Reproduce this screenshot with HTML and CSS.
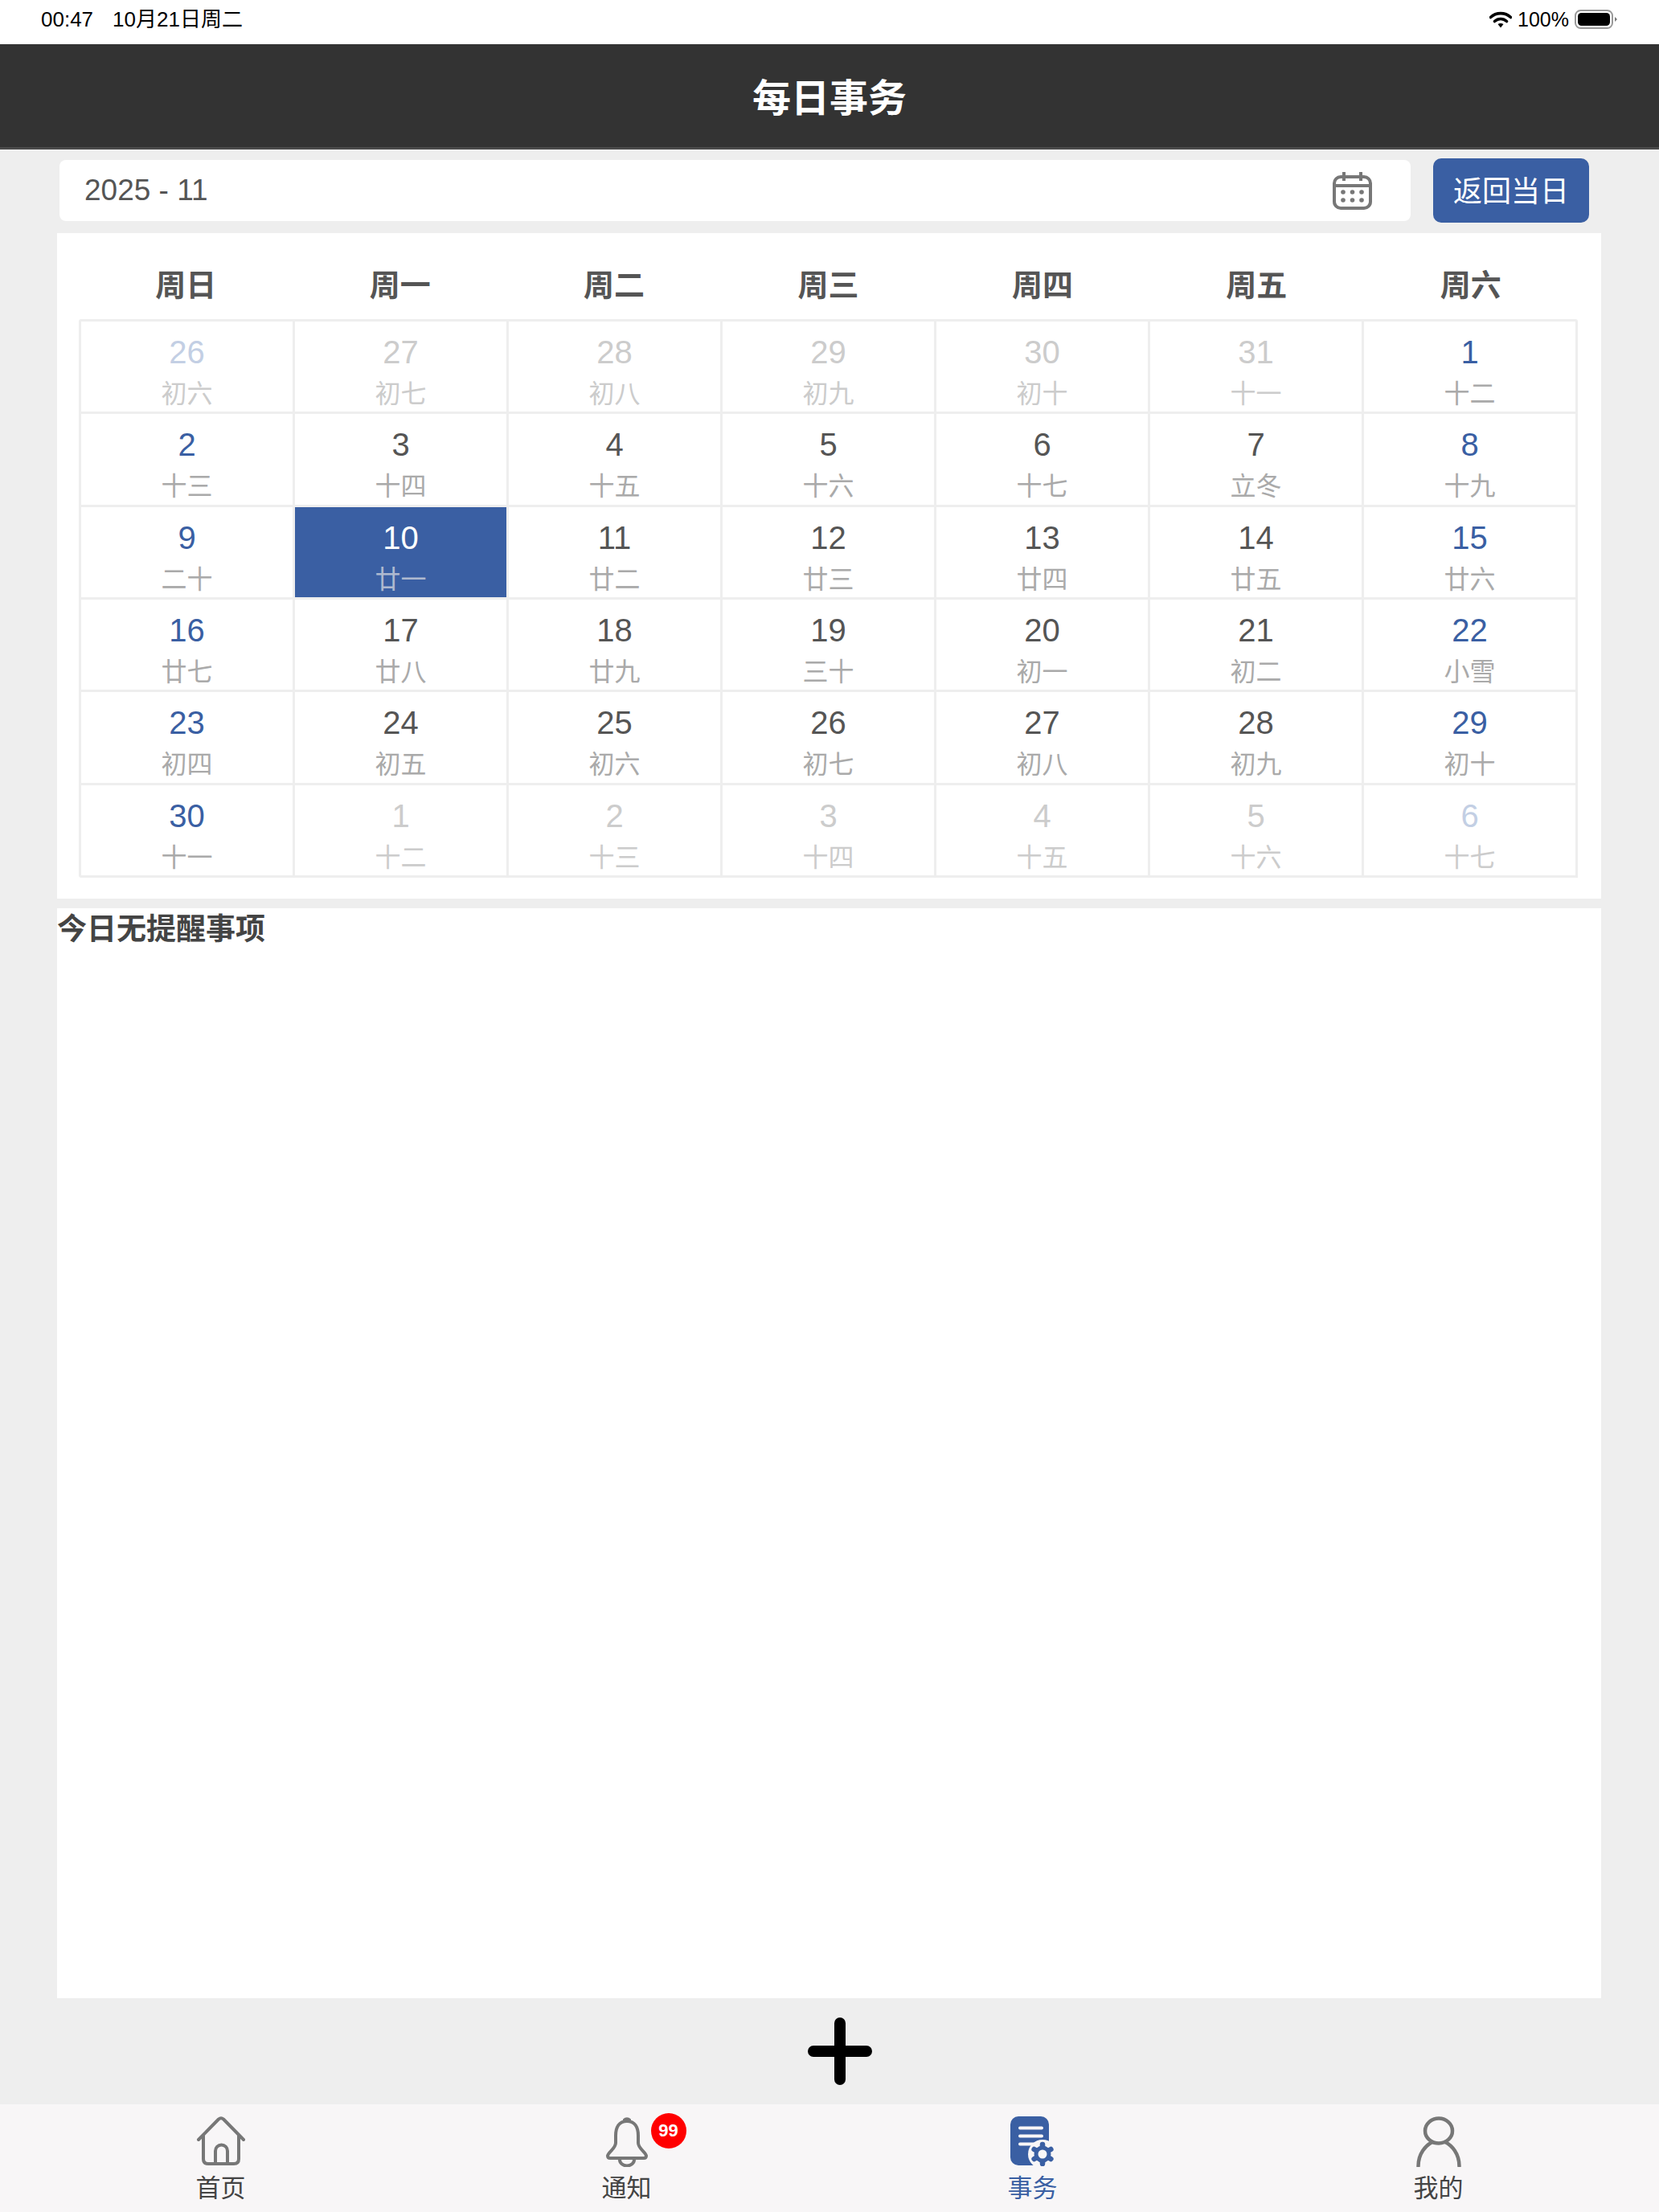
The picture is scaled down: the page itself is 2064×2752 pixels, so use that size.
FILE: index.html
```html
<!DOCTYPE html>
<html lang="zh-CN">
<head>
  <meta charset="UTF-8">
  <title>每日事务</title>
  <link rel="stylesheet" href="styles.css">
</head>
<body>
  <div class="app">

    <!-- status bar -->
    <div class="status-bar">
      <div class="status-left">
        <span>00:47</span>
        <span>10月21日周二</span>
      </div>
      <div class="status-right">
        <svg class="wifi-icon" viewBox="0 0 28 21">
          <path d="M1.5 7.5C8.5 1 19.5 1 26.5 7.5M6.5 12.5C11 8.5 17 8.5 21.5 12.5" fill="none" stroke="#000" stroke-width="3.6" stroke-linecap="round"/>
          <path d="M10.5 16Q14 14 17.5 16L14 20.5Z" fill="#000"/>
        </svg>
        <span>100%</span>
        <svg class="battery-icon" viewBox="0 0 53 24">
          <rect x="1" y="1" width="46" height="22" rx="6.5" fill="none" stroke="#999" stroke-width="2"/>
          <rect x="4" y="4" width="40" height="16" rx="4.5" fill="#000"/>
          <path d="M50 9L53 12L50 15Z" fill="#777"/>
        </svg>
      </div>
    </div>

    <div class="page-header">每日事务</div>

    <div class="main">
      <div class="toolbar">
        <div class="date-input">
          <span>2025 - 11</span>
          <svg class="calendar-icon" viewBox="0 0 49 48">
            <rect x="2" y="7" width="45" height="39" rx="8" fill="none" stroke="#777" stroke-width="4"/>
            <path d="M2 18H47M14 1V12M35 1V12" fill="none" stroke="#777" stroke-width="4"/>
            <g fill="#777">
              <circle cx="13" cy="26" r="2.8"/><circle cx="24.5" cy="26" r="2.8"/><circle cx="36" cy="26" r="2.8"/>
              <circle cx="13" cy="36" r="2.8"/><circle cx="24.5" cy="36" r="2.8"/><circle cx="36" cy="36" r="2.8"/>
            </g>
          </svg>
        </div>
        <div class="today-btn">返回当日</div>
      </div>

      <div class="calendar-card">
        <div class="week-row">
          <div>周日</div><div>周一</div><div>周二</div><div>周三</div><div>周四</div><div>周五</div><div>周六</div>
        </div>
        <div class="day-grid">
          <div class="day other weekend"><b>26</b><i>初六</i></div>
          <div class="day other"><b>27</b><i>初七</i></div>
          <div class="day other"><b>28</b><i>初八</i></div>
          <div class="day other"><b>29</b><i>初九</i></div>
          <div class="day other"><b>30</b><i>初十</i></div>
          <div class="day other"><b>31</b><i>十一</i></div>
          <div class="day weekend"><b>1</b><i>十二</i></div>

          <div class="day weekend"><b>2</b><i>十三</i></div>
          <div class="day"><b>3</b><i>十四</i></div>
          <div class="day"><b>4</b><i>十五</i></div>
          <div class="day"><b>5</b><i>十六</i></div>
          <div class="day"><b>6</b><i>十七</i></div>
          <div class="day"><b>7</b><i>立冬</i></div>
          <div class="day weekend"><b>8</b><i>十九</i></div>

          <div class="day weekend"><b>9</b><i>二十</i></div>
          <div class="day selected"><b>10</b><i>廿一</i></div>
          <div class="day"><b>11</b><i>廿二</i></div>
          <div class="day"><b>12</b><i>廿三</i></div>
          <div class="day"><b>13</b><i>廿四</i></div>
          <div class="day"><b>14</b><i>廿五</i></div>
          <div class="day weekend"><b>15</b><i>廿六</i></div>

          <div class="day weekend"><b>16</b><i>廿七</i></div>
          <div class="day"><b>17</b><i>廿八</i></div>
          <div class="day"><b>18</b><i>廿九</i></div>
          <div class="day"><b>19</b><i>三十</i></div>
          <div class="day"><b>20</b><i>初一</i></div>
          <div class="day"><b>21</b><i>初二</i></div>
          <div class="day weekend"><b>22</b><i>小雪</i></div>

          <div class="day weekend"><b>23</b><i>初四</i></div>
          <div class="day"><b>24</b><i>初五</i></div>
          <div class="day"><b>25</b><i>初六</i></div>
          <div class="day"><b>26</b><i>初七</i></div>
          <div class="day"><b>27</b><i>初八</i></div>
          <div class="day"><b>28</b><i>初九</i></div>
          <div class="day weekend"><b>29</b><i>初十</i></div>

          <div class="day weekend"><b>30</b><i>十一</i></div>
          <div class="day other"><b>1</b><i>十二</i></div>
          <div class="day other"><b>2</b><i>十三</i></div>
          <div class="day other"><b>3</b><i>十四</i></div>
          <div class="day other"><b>4</b><i>十五</i></div>
          <div class="day other"><b>5</b><i>十六</i></div>
          <div class="day other weekend"><b>6</b><i>十七</i></div>
        </div>
      </div>

      <div class="reminder-card">今日无提醒事项</div>

      <div class="add-row">
        <svg class="add-icon" viewBox="0 0 80 84">
          <path d="M40 7V77M7 42H73" fill="none" stroke="#000" stroke-width="14" stroke-linecap="round"/>
        </svg>
      </div>
    </div>

    <!-- bottom tabs -->
    <div class="tab-bar">
      <div class="tab">
        <div class="tab-icon">
          <svg width="62" height="62" viewBox="0 0 62 62">
            <path d="M3 29L28 3.5Q31 1 34 3.5L59 29M9 24V53Q9 59 15 59H47Q53 59 53 53V24" fill="none" stroke="#777" stroke-width="4" stroke-linecap="round" stroke-linejoin="round"/>
            <path d="M24 59V43A7.5 7.500 0 0 1 39 43V59" fill="none" stroke="#777" stroke-width="4"/>
          </svg>
        </div>
        <span>首页</span>
      </div>
      <div class="tab">
        <div class="tab-icon">
          <svg width="54" height="63" viewBox="0 0 54 63">
            <path d="M27 6C17 6 13 14 13 24V33C13 40 4 44 3 49Q3 52 6 52H48Q51 52 51 49C50 44 41 40 41 33V24C41 14 37 6 27 6Z" fill="none" stroke="#777" stroke-width="4" stroke-linejoin="round"/>
            <path d="M22 3.5Q27 -1 32 3.5V7H22Z" fill="#777"/>
            <path d="M18 54A9 7.5 0 0 0 36 54" fill="none" stroke="#777" stroke-width="4"/>
          </svg>
          <span class="badge">99</span>
        </div>
        <span>通知</span>
      </div>
      <div class="tab active">
        <div class="tab-icon">
          <svg width="55" height="62" viewBox="0 0 55 62">
            <rect x="0" y="0" width="48" height="61" rx="10" fill="#3a5fa3"/>
            <path d="M12 14.5H39M12 24.5H39M12 34.5H31" stroke="#f8f6f7" stroke-width="4" stroke-linecap="round"/>
            <circle cx="40" cy="47" r="18" fill="#f8f6f7"/>
            <circle cx="40" cy="47" r="10.500" fill="#3a5fa3"/>
            <path d="M40 35V59M29.600 41L50.400 53M29.600 53L50.400 41" stroke="#3a5fa3" stroke-width="6.500" stroke-linecap="round"/>
            <circle cx="40" cy="47" r="5.500" fill="#f8f6f7"/>
          </svg>
        </div>
        <span>事务</span>
      </div>
      <div class="tab">
        <div class="tab-icon">
          <svg width="56" height="63" viewBox="0 0 56 63">
            <ellipse cx="28" cy="18" rx="17" ry="15.5" fill="none" stroke="#777" stroke-width="4.500"/>
            <path d="M2.500 62C2.500 46 12 36 20 32M53.500 62C53.500 46 44 36 36 32" fill="none" stroke="#777" stroke-width="4.500" stroke-linecap="round"/>
          </svg>
        </div>
        <span>我的</span>
      </div>
    </div>

  </div>
</body>
</html>
```

FILE: styles.css
```css
* {
  box-sizing: border-box;
}

html, body {
  margin: 0;
  padding: 0;
  height: 100%;
  background: #eeeeee;
  font-family: "Liberation Sans", "Noto Sans CJK SC", sans-serif;
  overflow: hidden;
}

.app {
  display: flex;
  flex-direction: column;
  height: 100vh;
}

/* status bar */
.status-bar {
  height: 55px;
  flex-shrink: 0;
  background: #fff;
  color: #000;
  font-size: 25px;
  line-height: 30px;
  display: flex;
  justify-content: space-between;
  align-items: center;
  padding: 0 52px 7px 51px;
}

.status-left {
  display: flex;
  align-items: center;
  gap: 24px;
  font-size: 26px;
}

.status-left span {
  display: block;
  height: 30px;
}

.status-right {
  display: flex;
  align-items: center;
  gap: 7px;
}

.wifi-icon {
  width: 28px;
  height: 21px;
}

.battery-icon {
  width: 53px;
  height: 24px;
}

/* header */
.page-header {
  height: 131px;
  flex-shrink: 0;
  background: #333333;
  border-bottom: 3px solid #4a4a4a;
  color: #fff;
  font-size: 48px;
  font-weight: bold;
  display: flex;
  justify-content: center;
  align-items: center;
  padding-bottom: 3px;
}

.main {
  flex: 1;
  min-height: 0;
  display: flex;
  flex-direction: column;
  padding: 11px 72px 0 71px;
}

/* month picker */
.toolbar {
  display: flex;
  align-items: center;
  gap: 28px;
  height: 80px;
  flex-shrink: 0;
  padding: 0 15px 0 3px;
}

.date-input {
  flex: 1;
  height: 76px;
  background: #fff;
  border-radius: 8px;
  display: flex;
  justify-content: space-between;
  align-items: center;
  padding: 0 48px 0 31px;
  font-size: 37px;
  color: #555;
}

.calendar-icon {
  width: 49px;
  height: 48px;
}

.today-btn {
  width: 194px;
  height: 80px;
  background: #3a5fa3;
  border-radius: 10px;
  color: #fff;
  font-size: 36px;
  display: flex;
  justify-content: center;
  align-items: center;
  padding-bottom: 4px;
}

/* calendar */
.calendar-card {
  margin-top: 13px;
  flex-shrink: 0;
  background: #fff;
  padding: 0 29px 26px 27px;
}

.week-row {
  display: grid;
  grid-template-columns: repeat(7, 1fr);
  height: 107px;
  padding-top: 40px;
  font-size: 38px;
  font-weight: bold;
  line-height: 50px;
  color: #555;
  text-align: center;
}

.day-grid {
  display: grid;
  grid-template-columns: repeat(7, 1fr);
  grid-template-rows: repeat(6, 1fr);
  height: 695px;
  border-top: 3px solid #eeeeee;
  border-left: 3px solid #eeeeee;
  border-radius: 3px;
}

.day {
  border-right: 3px solid #eeeeee;
  border-bottom: 3px solid #eeeeee;
  text-align: center;
  padding-top: 15px;
  min-height: 0;
}

.day b {
  display: block;
  font-weight: normal;
  font-size: 40px;
  line-height: 46px;
  color: #555;
}

.day i {
  display: block;
  font-style: normal;
  font-size: 32px;
  line-height: 42px;
  margin-top: 8px;
  color: #aaaaaa;
}

.day.weekend b {
  color: #3a5fa3;
}

.day.other b {
  color: #cccccc;
}

.day.other i {
  color: #cccccc;
}

.day.other.weekend b {
  color: #c3cfe4;
}

.day.selected {
  background: #3a5fa3;
}

.day.selected b {
  color: #fff;
}

.day.selected i {
  color: #aeb9cf;
}

/* reminders */
.reminder-card {
  margin-top: 12px;
  flex: 1;
  min-height: 0;
  background: #fff;
  padding-top: 5px;
  font-size: 37px;
  font-weight: bold;
  line-height: 44px;
  color: #444;
}

.add-row {
  height: 132px;
  flex-shrink: 0;
  display: flex;
  justify-content: center;
  align-items: center;
  padding-left: 26px;
}

.add-icon {
  width: 80px;
  height: 84px;
}

/* bottom tabs */
.tab-bar {
  height: 134px;
  flex-shrink: 0;
  background: #f8f6f7;
  display: grid;
  grid-template-columns: repeat(4, 1fr);
  padding: 15px 22px 0;
}

.tab {
  display: flex;
  flex-direction: column;
  align-items: center;
  font-size: 31px;
  line-height: 40px;
  color: #444;
}

.tab.active {
  color: #3a5fa3;
}

.tab-icon {
  position: relative;
  height: 64px;
  margin-bottom: 6px;
}

.tab-icon svg {
  display: block;
}

.badge {
  position: absolute;
  left: 57px;
  top: -4px;
  width: 44px;
  height: 44px;
  border-radius: 50%;
  background: #ff0000;
  color: #fff;
  font-size: 22px;
  font-weight: bold;
  line-height: 44px;
  text-align: center;
}
```
